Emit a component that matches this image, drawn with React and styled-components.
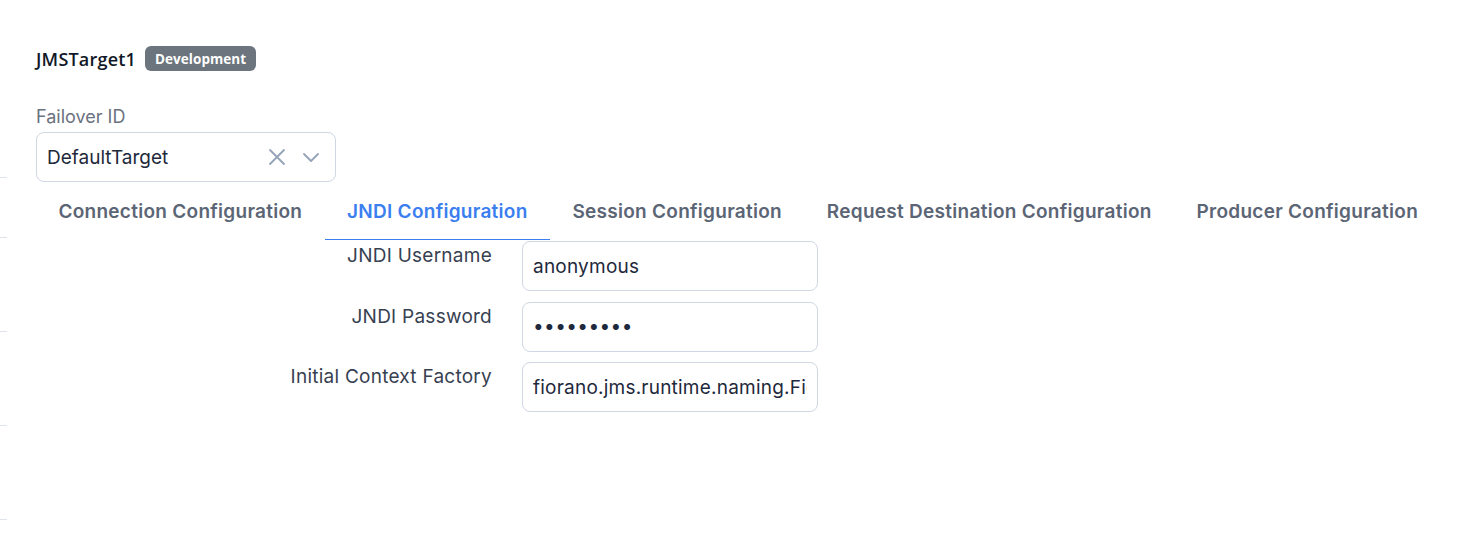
import React from "react";
import styled, { createGlobalStyle } from "styled-components";

const Global = createGlobalStyle`
  html, body { margin: 0; padding: 0; background: #ffffff; }
  body { font-family: Inter, "Noto Sans", sans-serif; color: #1f2937; }
  * { box-sizing: border-box; }
`;

const Page = styled.div`
  display: flex;
  width: 1472px;
  min-height: 546px;
`;

const Rail = styled.div`
  display: flex;
  flex-direction: column;
  width: 7px;
  padding-top: 177px;
`;

const Tick = styled.div`
  height: 1px;
  width: 7px;
  background: #dfe3ea;
  margin-top: ${(p) => p.$gap || 0}px;
`;

const Content = styled.div`
  display: flex;
  flex-direction: column;
  padding: 46px 0 0 29px;
  flex: 1;
`;

const Header = styled.div`
  display: flex;
  align-items: center;
  gap: 9px;
  height: 25px;
`;

const Title = styled.span`
  font-family: "Open Sans", "Noto Sans", sans-serif;
  font-weight: 600;
  font-size: 18px;
  color: #111827;
  letter-spacing: 0.2px;
`;

const Badge = styled.span`
  display: inline-flex;
  align-items: center;
  height: 25px;
  padding: 0 10px;
  border-radius: 6px;
  background: #6c757d;
  color: #fff;
  font-family: "Open Sans", "Noto Sans", sans-serif;
  font-weight: 700;
  font-size: 13.5px;
  letter-spacing: 0.05px;
`;

const FieldLabel = styled.div`
  margin-top: 34px;
  height: 27px;
  font-size: 18px;
  line-height: 24px;
  color: #6b7280;
`;

const Select = styled.div`
  display: flex;
  align-items: center;
  width: 300px;
  height: 50px;
  border: 1px solid #cfd7e3;
  border-radius: 8px;
  padding: 0 14px 0 10px;
`;

const SelectValue = styled.span`
  flex: 1;
  font-size: 19px;
  color: #1e293b;
`;

const IconBox = styled.span`
  display: inline-flex;
  width: 20px;
  height: 20px;
  margin-left: ${(p) => p.$ml || 0}px;
  color: #94a3b8;
`;

const Tabs = styled.div`
  display: flex;
  height: 58px;
`;

const Tab = styled.div`
  display: flex;
  align-items: center;
  padding: 2px 22.4px 0;
  font-size: 19px;
  font-weight: 600;
  letter-spacing: 0.28px;
  color: ${(p) => (p.$active ? "#3b7ef0" : "#5b6575")};
  border-bottom: 1.5px solid ${(p) => (p.$active ? "#3b7ef0" : "transparent")};
  white-space: nowrap;
`;

const Form = styled.div`
  display: grid;
  grid-template-columns: 456px 296px;
  column-gap: 30px;
  row-gap: 10.5px;
  margin-top: 1px;
`;

const Label = styled.label`
  text-align: right;
  font-size: 19px;
  line-height: 24px;
  padding-top: 3px;
  letter-spacing: 0.25px;
  color: #374151;
`;

const Input = styled.input`
  width: 296px;
  height: 50px;
  border: 1px solid #cfd7e3;
  border-radius: 8px;
  padding: 0 10px;
  font-family: Inter, "Noto Sans", sans-serif;
  font-size: 19px;
  color: #1e293b;
  background: #fff;
  outline: none;
  letter-spacing: ${(p) => (p.type === "password" ? "0.4px" : "0.22px")};
`;

const XIcon = () => (
  <svg viewBox="0 0 20 20" width="20" height="20" fill="none" stroke="currentColor" strokeWidth="1.8" strokeLinecap="round">
    <path d="M3 3l14 14M17 3L3 17" />
  </svg>
);

const Chevron = () => (
  <svg viewBox="0 0 20 20" width="20" height="20" fill="none" stroke="currentColor" strokeWidth="1.8" strokeLinecap="round" strokeLinejoin="round">
    <path d="M3 7l7 7 7-7" />
  </svg>
);

const tabs = [
  "Connection Configuration",
  "JNDI Configuration",
  "Session Configuration",
  "Request Destination Configuration",
  "Producer Configuration",
];

export default function App() {
  return (
    <>
      <Global />
      <Page>
        <Rail>
          <Tick />
          <Tick $gap={59} />
          <Tick $gap={93} />
          <Tick $gap={93} />
          <Tick $gap={93} />
        </Rail>
        <Content>
          <Header>
            <Title>JMSTarget1</Title>
            <Badge>Development</Badge>
          </Header>
          <FieldLabel>Failover ID</FieldLabel>
          <Select>
            <SelectValue>DefaultTarget</SelectValue>
            <IconBox><XIcon /></IconBox>
            <IconBox $ml={14}><Chevron /></IconBox>
          </Select>
          <Tabs>
            {tabs.map((t, i) => (
              <Tab key={t} $active={i === 1}>{t}</Tab>
            ))}
          </Tabs>
          <Form>
            <Label>JNDI Username</Label>
            <Input readOnly value="anonymous" />
            <Label>JNDI Password</Label>
            <Input readOnly type="password" value="anonymous" />
            <Label>Initial Context Factory</Label>
            <Input readOnly value="fiorano.jms.runtime.naming.FioranoInitialContextFactory" />
          </Form>
        </Content>
      </Page>
    </>
  );
}
